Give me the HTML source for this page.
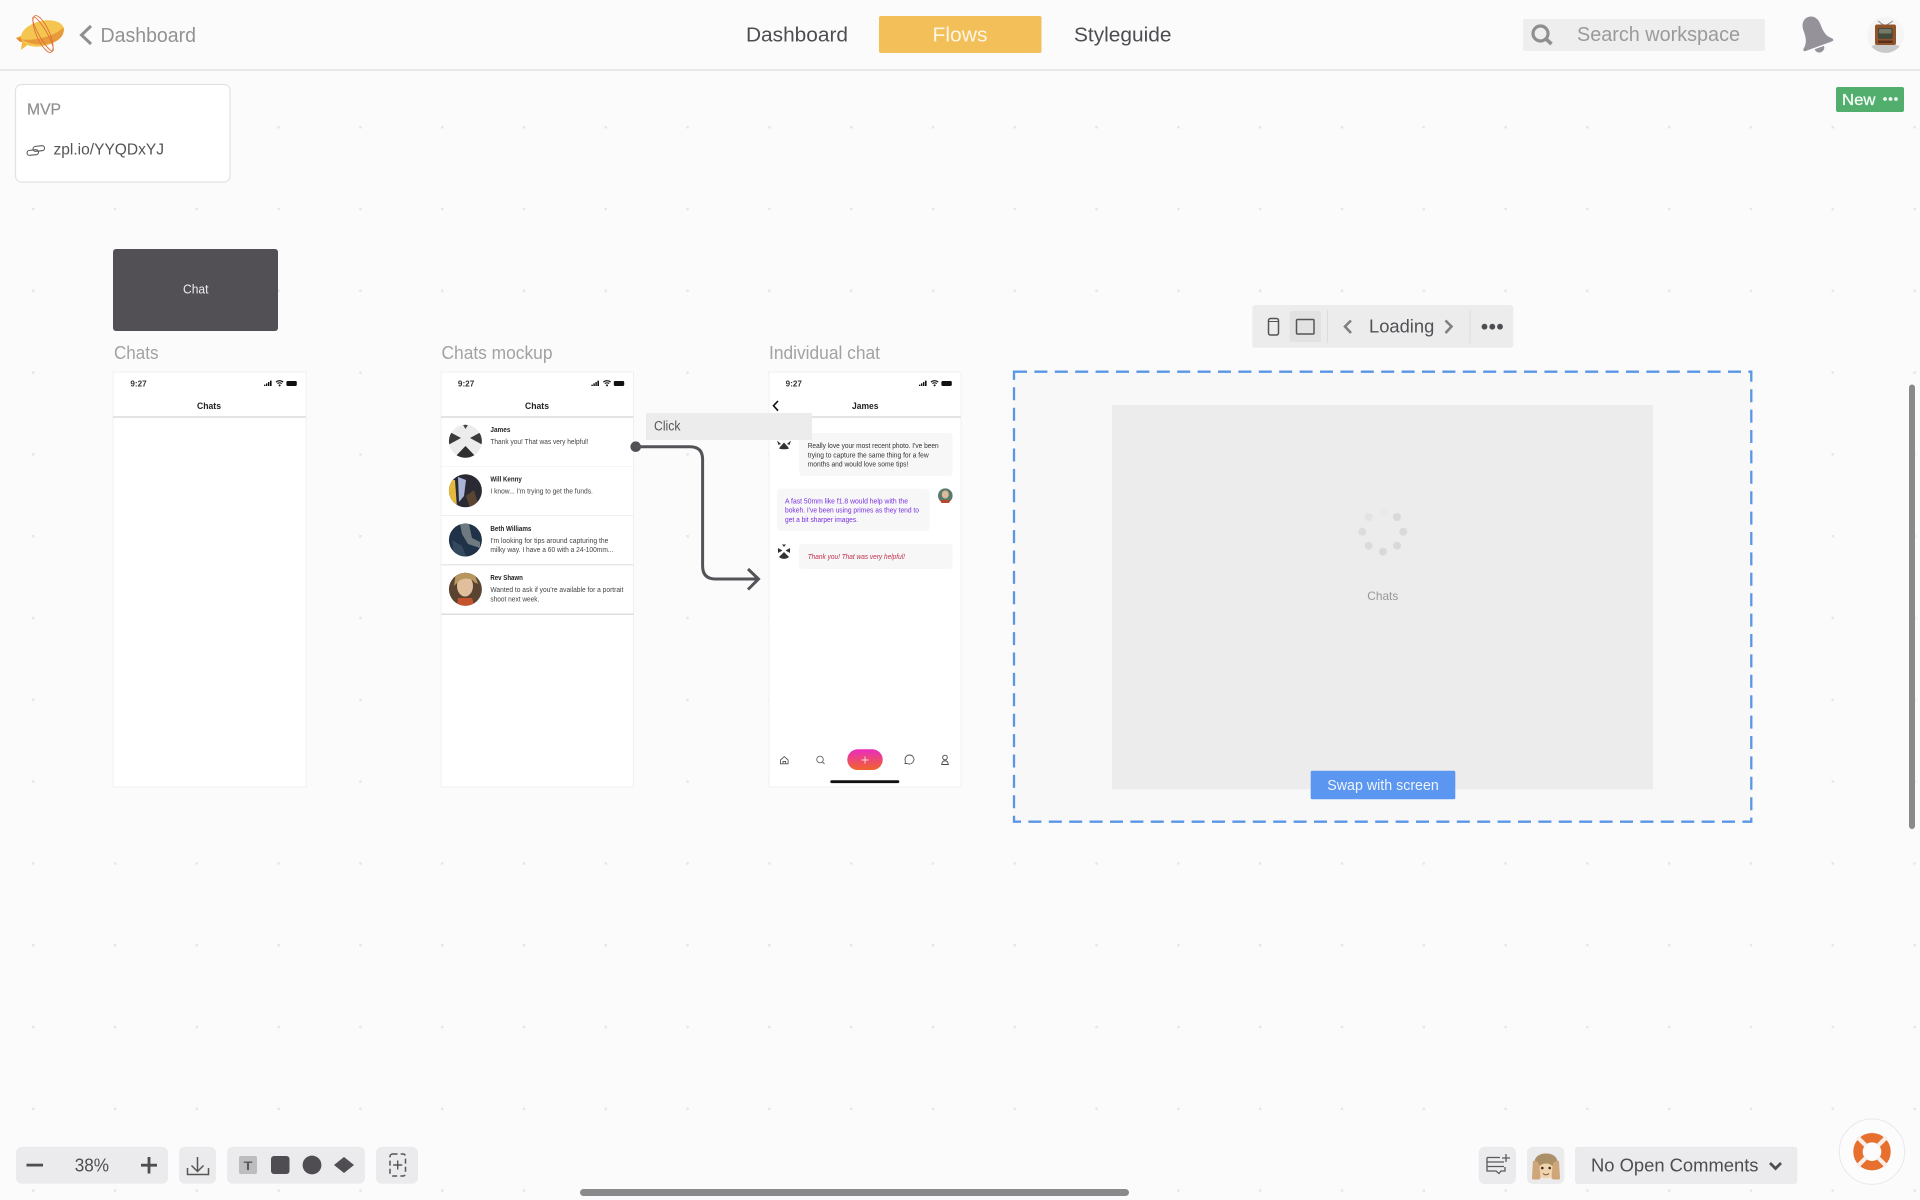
<!DOCTYPE html>
<html>
<head>
<meta charset="utf-8">
<style>
html,body{margin:0;padding:0;background:#fbfbfc;width:1920px;height:1200px;overflow:hidden}
svg{display:block;filter:blur(.35px)}
text{font-family:"Liberation Sans",sans-serif}
</style>
</head>
<body>
<svg xmlns="http://www.w3.org/2000/svg" width="1920" height="1200" viewBox="0 0 1920 1200">
<defs>
<pattern id="grid" x="32" y="126" width="81.8" height="81.8" patternUnits="userSpaceOnUse"><rect width="2.4" height="2.4" fill="#e6e6e8"/></pattern>
<linearGradient id="pill" x1="0" y1="0" x2="0" y2="1"><stop offset="0" stop-color="#e92cc0"/><stop offset="1" stop-color="#f0642a"/></linearGradient>
<clipPath id="c1"><circle cx="465.4" cy="441.3" r="16.5"/></clipPath>
<clipPath id="c2"><circle cx="465.4" cy="490.7" r="16.5"/></clipPath>
<clipPath id="c3"><circle cx="465.4" cy="540" r="16.5"/></clipPath>
<clipPath id="c4"><circle cx="465.4" cy="589.3" r="16.5"/></clipPath>
<g id="st">
<path d="M264 386h1.4v-1.4H264zM266 386h1.4v-2.6H266zM268 386h1.4v-4H268zM270 386h1.6v-5.4H270z" fill="#111"/>
<path d="M276 382.2c2-2 5.2-2 7.2 0M277.4 383.6c1.2-1.1 3.2-1.1 4.4 0" fill="none" stroke="#111" stroke-width="1.1"/><circle cx="279.6" cy="385.4" r="1" fill="#111"/>
<rect x="286.4" y="381" width="10.4" height="5" rx="1.2" fill="#111"/>
</g>
</defs>
<rect width="1920" height="1200" fill="#fbfbfc"/>
<rect y="72" width="1920" height="1128" fill="url(#grid)"/>

<!-- header -->
<rect y="69" width="1920" height="2" fill="#e8e8e9"/>
<!-- logo -->
<g>
<path d="M16 38l11-5 4 9-10 8 1-8z" fill="#f3b83c"/>
<path d="M16 38l11-1 2 4-9 1z" fill="#e68a35"/>
<ellipse cx="42.500" cy="33.500" rx="22" ry="12.500" transform="rotate(-14 42.500 33.500)" fill="#f4c64f"/>
<path d="M21.500 39.500c10 1 30-1 42-12 1 6-2 11-8 14-8 4-22 5-34-2z" fill="#e89a3a"/>
<ellipse cx="43" cy="34" rx="6.500" ry="20" transform="rotate(-24 43 34)" fill="none" stroke="#e0703a" stroke-width=".9"/>
<ellipse cx="43" cy="34" rx="4" ry="19.500" transform="rotate(-30 43 34)" fill="none" stroke="#e0703a" stroke-width=".9"/>
</g>
<path d="M91 26L81.500 35l9.500 9" fill="none" stroke="#8f8f91" stroke-width="3"/>
<text x="100.500" y="42" font-size="20" fill="#929294" textLength="95.500" lengthAdjust="spacingAndGlyphs">Dashboard</text>
<text x="746" y="41.700" font-size="20" fill="#4f4c51" textLength="102" lengthAdjust="spacingAndGlyphs">Dashboard</text>
<rect x="879" y="16" width="162.500" height="37" rx="2" fill="#f2bf58"/>
<text x="932.500" y="41.700" font-size="20" fill="#fdf6e4" textLength="55" lengthAdjust="spacingAndGlyphs">Flows</text>
<text x="1074" y="41.700" font-size="20" fill="#4f4c51" textLength="97.500" lengthAdjust="spacingAndGlyphs">Styleguide</text>
<!-- search -->
<rect x="1523" y="19" width="242" height="32" rx="2" fill="#eeeeef"/>
<circle cx="1540.500" cy="33.500" r="7.500" fill="none" stroke="#8f8f91" stroke-width="3.200"/>
<path d="M1546 39l5.500 5" stroke="#8f8f91" stroke-width="3.600" fill="none"/>
<text x="1577" y="41" font-size="20" fill="#9a9a9c" textLength="163" lengthAdjust="spacingAndGlyphs">Search workspace</text>
<!-- bell -->
<g transform="translate(1814 33) rotate(-20)" fill="#95929a">
<path d="M-15 11C-10 7-9 2-9-6c0-7 4-11 9-11s9 4 9 11c0 8 1 13 6 17 1.500 1.500 1 3-1 3h-28c-2 0-2.500-1.500-1-3z"/>
<path d="M-5 15.500a5 5 0 0 0 10 0z"/>
</g>
<!-- tv avatar -->
<circle cx="1885.500" cy="35" r="18.500" fill="#f5f5f6"/>
<path d="M1871.500 46.500c3-3.500 25-3.500 28 0a18.500 18.500 0 0 1-28 0z" fill="#c9c9c9"/>
<path d="M1878 21l7 5 8-5" fill="none" stroke="#8a8a8a" stroke-width="1"/>
<rect x="1875" y="24.500" width="21" height="20.500" rx="2" fill="#91532b"/>
<rect x="1878" y="28" width="14.700" height="11" rx="1.500" fill="#454a3c"/>
<rect x="1879" y="29" width="12.500" height="4.500" rx="1.500" fill="#747a68"/>
<rect x="1878" y="40.500" width="14.700" height="2.500" fill="#5c3018"/>
<!-- New -->
<rect x="1836" y="87" width="68" height="25" rx="2" fill="#52ae6d"/>
<text x="1842" y="105" font-size="16" fill="#f3faf5" stroke="#f3faf5" stroke-width=".3" textLength="33.500" lengthAdjust="spacingAndGlyphs">New</text>
<circle cx="1885" cy="99" r="1.900" fill="#eef8f1"/><circle cx="1890.500" cy="99" r="1.900" fill="#eef8f1"/><circle cx="1896" cy="99" r="1.900" fill="#eef8f1"/>

<!-- MVP card -->
<rect x="15.500" y="84.500" width="214.500" height="97.500" rx="6" fill="#fff" stroke="#e2e2e3" stroke-width="1.200"/>
<text x="27" y="114.500" font-size="15.500" fill="#8f8f91" stroke="#8f8f91" stroke-width=".2" textLength="34" lengthAdjust="spacingAndGlyphs">MVP</text>
<rect x="27" y="150" width="11.500" height="5" rx="2.500" fill="none" stroke="#5a5a5c" stroke-width="1.100" transform="rotate(-6 33 152)"/>
<rect x="33" y="146" width="11.500" height="5" rx="2.500" fill="none" stroke="#5a5a5c" stroke-width="1.100" transform="rotate(-6 39 148)"/>
<text x="53.500" y="154.700" font-size="16" fill="#545356" textLength="110.500" lengthAdjust="spacingAndGlyphs">zpl.io/YYQDxYJ</text>

<!-- chat rect -->
<rect x="113" y="249" width="165" height="82" rx="3" fill="#524f55"/>
<text x="183" y="293.500" font-size="12.500" fill="#ececed" textLength="25.500" lengthAdjust="spacingAndGlyphs">Chat</text>

<!-- labels -->
<text x="114" y="359" font-size="18" fill="#a2a2a4" textLength="44.500" lengthAdjust="spacingAndGlyphs">Chats</text>
<text x="441.500" y="359" font-size="18" fill="#a2a2a4" textLength="111" lengthAdjust="spacingAndGlyphs">Chats mockup</text>
<text x="769" y="359" font-size="18" fill="#a2a2a4" textLength="111" lengthAdjust="spacingAndGlyphs">Individual chat</text>

<!-- phone 1 -->
<rect x="113" y="372" width="193" height="415" fill="#fff" stroke="#f0f0f1" stroke-width="1"/>
<text x="130.400" y="386.300" font-size="8" font-weight="bold" fill="#333" textLength="16.200" lengthAdjust="spacingAndGlyphs">9:27</text>
<use href="#st"/>
<text x="197" y="409" font-size="9" font-weight="bold" fill="#222" textLength="24" lengthAdjust="spacingAndGlyphs">Chats</text>
<rect x="113" y="416" width="193" height="2" fill="#e4e4e5"/>

<!-- phone 2 -->
<rect x="441" y="372" width="192.500" height="415" fill="#fff" stroke="#f0f0f1" stroke-width="1"/>
<text x="457.900" y="386.300" font-size="8" font-weight="bold" fill="#333" textLength="16.400" lengthAdjust="spacingAndGlyphs">9:27</text>
<use href="#st" x="327.400"/>
<text x="525" y="409" font-size="9" font-weight="bold" fill="#222" textLength="24" lengthAdjust="spacingAndGlyphs">Chats</text>
<rect x="441" y="416" width="192.500" height="2" fill="#e4e4e5"/>
<rect x="441" y="466" width="192.500" height="1" fill="#f6f6f6"/>
<rect x="441" y="515" width="192.500" height="1" fill="#efefef"/>
<rect x="441" y="564" width="192.500" height="1.500" fill="#e8e8e8"/>
<rect x="441" y="613.500" width="192.500" height="1.500" fill="#dedede"/>
<!-- avatars -->
<g clip-path="url(#c1)"><rect x="448" y="424" width="35" height="35" fill="#ececec"/>
<path d="M448 431l13 7-13 7zM483 431l-13 7 13 7z" fill="#3a3a3a"/><path d="M453 459l12.500-13 12.500 13z" fill="#2e2e2e"/><path d="M462.500 424h6l-3 5z" fill="#444"/></g>
<g clip-path="url(#c2)"><rect x="448" y="474" width="35" height="35" fill="#2a2a35"/>
<path d="M448 480h7l2 28h-9z" fill="#e4b93e"/><path d="M458 477l8 3-2 16-5 6z" fill="#aab4d6"/><path d="M466 496l8-6 4 14-8 4z" fill="#5a4630"/></g>
<g clip-path="url(#c3)"><rect x="448" y="523" width="35" height="35" fill="#1f3248"/>
<path d="M460 524l9 0 3 14 8 4v6l-12-4-6-10z" fill="#6f7a80"/><path d="M452 540l10 6 4 10-12 0z" fill="#34495e"/></g>
<g clip-path="url(#c4)"><rect x="448" y="572" width="35" height="35" fill="#5a4330"/>
<ellipse cx="465" cy="586" rx="8" ry="10.500" fill="#e2bf9c"/><path d="M456 572h18l4 12-4-2c-2-4-12-5-16 0l-4 4z" fill="#b8975e"/><path d="M458 598h14l3 10h-18z" fill="#c4542e"/></g>
<!-- names -->
<text x="490.400" y="431.800" font-size="7" font-weight="bold" fill="#222" textLength="20" lengthAdjust="spacingAndGlyphs">James</text>
<text x="490.400" y="444.200" font-size="7" fill="#444" textLength="98" lengthAdjust="spacingAndGlyphs">Thank you! That was very helpful!</text>
<text x="490.400" y="481.500" font-size="7" font-weight="bold" fill="#222" textLength="31.400" lengthAdjust="spacingAndGlyphs">Will Kenny</text>
<text x="490.400" y="493.500" font-size="7" fill="#444" textLength="102.500" lengthAdjust="spacingAndGlyphs">I know... I'm trying to get the funds.</text>
<text x="490.400" y="530.800" font-size="7" font-weight="bold" fill="#222" textLength="41" lengthAdjust="spacingAndGlyphs">Beth Williams</text>
<text x="490.400" y="542.800" font-size="7" fill="#444" textLength="118" lengthAdjust="spacingAndGlyphs">I'm looking for tips around capturing the</text>
<text x="490.400" y="552.200" font-size="7" fill="#444" textLength="123" lengthAdjust="spacingAndGlyphs">milky way. I have a 60 with a 24-100mm...</text>
<text x="490.400" y="580.200" font-size="7" font-weight="bold" fill="#222" textLength="32.500" lengthAdjust="spacingAndGlyphs">Rev Shawn</text>
<text x="490.400" y="592.200" font-size="7" fill="#444" textLength="133" lengthAdjust="spacingAndGlyphs">Wanted to ask if you're available for a portrait</text>
<text x="490.400" y="601.500" font-size="7" fill="#444" textLength="49" lengthAdjust="spacingAndGlyphs">shoot next week.</text>

<!-- phone 3 -->
<rect x="769" y="372" width="192" height="415" fill="#fff" stroke="#f0f0f1" stroke-width="1"/>
<text x="785.700" y="386.300" font-size="8" font-weight="bold" fill="#333" textLength="16.200" lengthAdjust="spacingAndGlyphs">9:27</text>
<use href="#st" x="655"/>
<path d="M778 401l-4.500 4.700 4.500 5" fill="none" stroke="#111" stroke-width="1.600"/>
<text x="852" y="409" font-size="9" font-weight="bold" fill="#222" textLength="26.500" lengthAdjust="spacingAndGlyphs">James</text>
<rect x="769" y="416" width="192" height="2" fill="#e4e4e5"/>
<!-- bubbles -->
<path d="M777 440.500l4 3.500-2.500 1zM791 440.500l-4 3.500 2.500 1z" fill="#333"/><path d="M780 447l4-4.500 4 4.500 1 1.500c-3 1-7 1-10 0z" fill="#333"/>
<rect x="799" y="433" width="153.700" height="43" rx="4" fill="#f7f7f8"/>
<text x="807.700" y="448" font-size="7" fill="#333" textLength="131" lengthAdjust="spacingAndGlyphs">Really love your most recent photo. I've been</text>
<text x="807.700" y="457.300" font-size="7" fill="#333" textLength="121" lengthAdjust="spacingAndGlyphs">trying to capture the same thing for a few</text>
<text x="807.700" y="466.600" font-size="7" fill="#333" textLength="100.700" lengthAdjust="spacingAndGlyphs">months and would love some tips!</text>
<rect x="777" y="488.700" width="152.700" height="42.300" rx="4" fill="#f7f7f8"/>
<text x="785" y="503.300" font-size="7" fill="#7a2fe0" textLength="123" lengthAdjust="spacingAndGlyphs">A fast 50mm like f1.8 would help with the</text>
<text x="785" y="512.600" font-size="7" fill="#7a2fe0" textLength="134" lengthAdjust="spacingAndGlyphs">bokeh. I've been using primes as they tend to</text>
<text x="785" y="522" font-size="7" fill="#7a2fe0" textLength="73" lengthAdjust="spacingAndGlyphs">get a bit sharper images.</text>
<circle cx="945.300" cy="495.700" r="7.300" fill="#5a7a6a"/><ellipse cx="945.300" cy="494.500" rx="3.500" ry="4" fill="#dcbb9c"/><path d="M940 500h10.500l-1.500 3h-7.500z" fill="#b8482c"/>
<path d="M778 548l4.500 2.500-4.500 2.500zM790 548l-4.500 2.500 4.500 2.500zM779 557l5-5 5 5c-3 2.500-7 2.500-10 0zM782 544.500h4l-2 2.500z" fill="#333"/>
<rect x="799" y="544" width="153.700" height="25" rx="4" fill="#f7f7f8"/>
<text x="807.700" y="558.800" font-size="7" font-style="italic" fill="#c2304f" textLength="97.300" lengthAdjust="spacingAndGlyphs">Thank you! That was very helpful!</text>
<!-- tab bar -->
<path d="M780.500 760l3.800-3.400 3.800 3.400v3.800h-7.600zM783 763.800v-2.300h2.600v2.300" fill="none" stroke="#555" stroke-width=".9"/>
<circle cx="820" cy="759.500" r="3.300" fill="none" stroke="#666" stroke-width=".9"/><path d="M822.500 762l2 2" stroke="#666" stroke-width=".9"/>
<rect x="847.300" y="749.300" width="35.400" height="20.700" rx="10.300" fill="url(#pill)"/>
<path d="M865 756.500v7M861.500 760h7" stroke="#fbd6d0" stroke-width="1"/>
<path d="M905 763.500l.5-2c-1.500-3.500 1-6.500 4-6.500s4.500 2.500 4.500 4.500-2 4.500-4.500 4.500c-1 0-2-.3-2.500-.5z" fill="none" stroke="#555" stroke-width=".9"/>
<circle cx="945" cy="757.500" r="2.300" fill="none" stroke="#444" stroke-width=".9"/><path d="M941.700 764.500c0-5 6.600-5 6.600 0z" fill="none" stroke="#444" stroke-width=".9"/>
<rect x="830.300" y="780.300" width="69" height="2.800" rx="1.200" fill="#111"/>

<!-- click + connector -->
<rect x="646" y="413" width="166" height="27" fill="#ececed"/>
<text x="654" y="430.500" font-size="13.500" fill="#57565a" textLength="26.500" lengthAdjust="spacingAndGlyphs">Click</text>
<circle cx="635.700" cy="446.700" r="5.300" fill="#524f55"/>
<path d="M636 446.700H690q12.600 0 12.600 12.600V566q0 13 13 13H758" fill="none" stroke="#555358" stroke-width="3"/>
<path d="M748 569l10.500 10-10.500 10.500" fill="none" stroke="#555358" stroke-width="3"/>

<!-- toolbar -->
<rect x="1252.300" y="305" width="261" height="42.700" rx="3" fill="#ececed"/>
<rect x="1268.500" y="318.500" width="10" height="16.500" rx="2" fill="none" stroke="#555" stroke-width="1.500"/>
<path d="M1269 321.500h9" stroke="#555" stroke-width="1"/>
<rect x="1289.700" y="311" width="31.300" height="31" rx="2" fill="#e2e2e3"/>
<rect x="1296.500" y="319.500" width="17.500" height="14.500" rx="1" fill="none" stroke="#555" stroke-width="1.500"/>
<rect x="1327" y="310" width="1" height="33" fill="#dcdcdd"/>
<path d="M1351 320.500l-6 6 6 6.500" fill="none" stroke="#808082" stroke-width="2.600"/>
<text x="1369" y="332.300" font-size="18" fill="#525155" textLength="65.300" lengthAdjust="spacingAndGlyphs">Loading</text>
<path d="M1445.500 320.500l6 6-6 6.500" fill="none" stroke="#808082" stroke-width="2.600"/>
<rect x="1469.500" y="310" width="1" height="33" fill="#dcdcdd"/>
<circle cx="1484.500" cy="326.700" r="2.900" fill="#4f4d52"/><circle cx="1492.300" cy="326.700" r="2.900" fill="#4f4d52"/><circle cx="1500" cy="326.700" r="2.900" fill="#4f4d52"/>

<!-- dashed box -->
<rect x="1014" y="371.700" width="737.300" height="450" fill="#f8f8f9" stroke="#5b96e6" stroke-width="2.300" stroke-dasharray="13 7.400"/>
<rect x="1112" y="405" width="541" height="384.300" fill="#ececed"/>
<circle cx="1384" cy="512.300" r="4" fill="#eaeaea"/>
<circle cx="1397" cy="517" r="4" fill="#d9d9da"/>
<circle cx="1403.300" cy="531.700" r="4" fill="#d9d9da"/>
<circle cx="1397" cy="545.700" r="4" fill="#d9d9da"/>
<circle cx="1383" cy="551.700" r="4" fill="#d9d9da"/>
<circle cx="1368.700" cy="545.700" r="4" fill="#dbdbdc"/>
<circle cx="1362.300" cy="531.700" r="4" fill="#dcdcdd"/>
<circle cx="1368.700" cy="517" r="4" fill="#e3e3e4"/>
<text x="1367.300" y="600" font-size="12" fill="#98989a" textLength="31" lengthAdjust="spacingAndGlyphs">Chats</text>
<rect x="1310.700" y="770.700" width="144.600" height="28.600" rx="1.500" fill="#5b96f0"/>
<text x="1327.300" y="790" font-size="14.500" fill="#eef4fe" textLength="111.500" lengthAdjust="spacingAndGlyphs">Swap with screen</text>

<!-- bottom-left tools -->
<rect x="16" y="1146.700" width="152" height="37" rx="6" fill="#ebebed"/>
<rect x="26.500" y="1163.700" width="16.500" height="2.800" fill="#4f4d52"/>
<text x="74.700" y="1171.300" font-size="18" fill="#4f4d52" textLength="34.300" lengthAdjust="spacingAndGlyphs">38%</text>
<path d="M149 1157v16.500M141 1165.200h16" stroke="#4f4d52" stroke-width="2.800"/>
<rect x="179" y="1146.700" width="37" height="37" rx="6" fill="#ebebed"/>
<path d="M197.500 1157v14M191.500 1165.500l6 6 6-6" fill="none" stroke="#555" stroke-width="1.500"/>
<path d="M187.500 1168v6.500h21V1168" fill="none" stroke="#555" stroke-width="1.500"/>
<rect x="227" y="1146.700" width="138" height="37" rx="6" fill="#ebebed"/>
<rect x="239" y="1156" width="18" height="18" rx="2" fill="#bdbdbf"/>
<text x="243.500" y="1170" font-size="12" font-weight="bold" fill="#5a585c" textLength="9" lengthAdjust="spacingAndGlyphs">T</text>
<rect x="271" y="1156" width="18.500" height="18" rx="3" fill="#4f4c52"/>
<circle cx="312" cy="1165" r="9.400" fill="#4f4c52"/>
<path d="M344 1157l10 8-10 8-10-8z" fill="#4f4c52"/>
<rect x="376" y="1146.700" width="42" height="37" rx="6" fill="#ebebed"/>
<rect x="390" y="1154" width="15.500" height="22" rx="2.500" fill="none" stroke="#555" stroke-width="1.500" stroke-dasharray="5 3.200"/>
<path d="M397.700 1160.500v9M393.200 1165h9" stroke="#555" stroke-width="1.400"/>

<!-- bottom-right -->
<rect x="1478.700" y="1146.700" width="37.300" height="37.300" rx="6" fill="#ebebed"/>
<path d="M1487 1157.500h13M1487 1162h17M1487 1166.500h17M1487 1157.500v13.500h9l3 2.500 2-2.500h4v-4" fill="none" stroke="#5a585c" stroke-width="1.300"/>
<path d="M1504 1155v8M1500 1159h8" stroke="#5a585c" stroke-width="1.300" transform="translate(2 -1)"/>
<rect x="1527" y="1146.700" width="37.300" height="37.300" rx="6" fill="#ebebed"/>
<!-- monkey -->
<path d="M1534 1176v-11c0-9 6-11.500 12-11.500s12 2.500 12 11.500v11z" fill="#ab8f66"/>
<ellipse cx="1546" cy="1171" rx="8.500" ry="7.500" fill="#efd3ad"/>
<circle cx="1542.300" cy="1168" r="1.300" fill="#3a2a1e"/><circle cx="1549.700" cy="1168" r="1.300" fill="#3a2a1e"/>
<path d="M1543 1173.500c2 1.800 4 1.800 6 0" fill="none" stroke="#7a5a3a" stroke-width="1"/>
<path d="M1533 1161c3-1 6 1 6.500 5l1 12c0 1-1.500 1.500-3 1.500h-4c-1.500 0-1.500-1-1.500-2zM1559 1161c-3-1-6 1-6.500 5l-1 12c0 1 1.500 1.500 3 1.500h4c1.500 0 1.500-1 1.500-2z" fill="#cfa67a"/>
<rect x="1575" y="1146.700" width="222.300" height="37.300" rx="3" fill="#ebebed"/>
<text x="1591" y="1171.300" font-size="18" fill="#4f4d52" textLength="167.500" lengthAdjust="spacingAndGlyphs">No Open Comments</text>
<path d="M1770 1163l5.500 5.500 5.500-5.500" fill="none" stroke="#4f4d52" stroke-width="2.800"/>
<circle cx="1872" cy="1151.700" r="32.700" fill="#fcfcfc" stroke="#e9e9ea" stroke-width="1"/>
<circle cx="1872" cy="1151.700" r="14" fill="none" stroke="#e8702f" stroke-width="9.400"/>
<path d="M1857.500 1137.200l8.500 8.500M1886.500 1137.200l-8.500 8.500M1857.500 1166.200l8.500-8.500M1886.500 1166.200l-8.500-8.500" stroke="#f7efe9" stroke-width="4.200"/>

<!-- scrollbars -->
<rect x="1909" y="384.500" width="6" height="444.500" rx="3" fill="#8a8a8c"/>
<rect x="580" y="1189" width="549" height="7" rx="3.500" fill="#8a8a8c"/>
</svg>
</body>
</html>
